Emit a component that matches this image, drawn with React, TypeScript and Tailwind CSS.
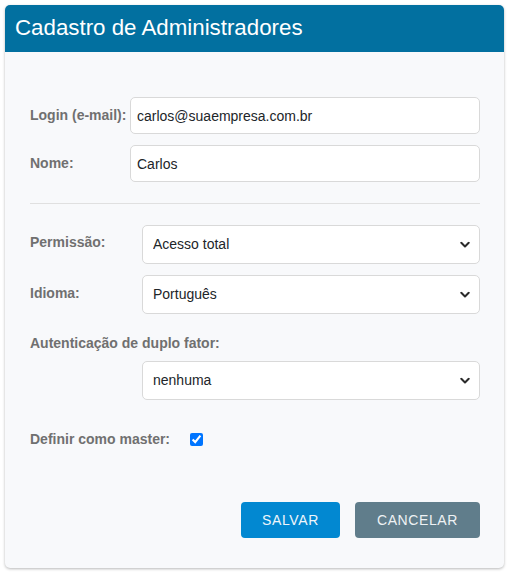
import React from "react";

function Chevron() {
  return (
    <svg
      className="pointer-events-none absolute right-[10px] top-1/2 -translate-y-1/2"
      width="10"
      height="7"
      viewBox="0 0 10 7"
      fill="none"
    >
      <path d="M1.3 1.3 L5 5 L8.7 1.3" stroke="#2b2b2b" strokeWidth="2" strokeLinecap="round" strokeLinejoin="round" />
    </svg>
  );
}

function Select({ value, options }: { value: string; options: string[] }) {
  return (
    <div className="relative flex-1">
      <select
        defaultValue={value}
        className="h-[39px] w-full appearance-none rounded-[5px] border border-[#d9d9d9] bg-white pl-[10px] pr-[30px] text-[14px] text-[#212529] outline-none"
      >
        {options.map((o) => (
          <option key={o} value={o}>
            {o}
          </option>
        ))}
      </select>
      <Chevron />
    </div>
  );
}

export default function App() {
  return (
    <div className="min-h-screen bg-white pl-[5px] pt-[5px]" style={{ fontFamily: '"Liberation Sans", Arial, sans-serif' }}>
      <div className="w-[499px] rounded-[5px] bg-[#f8f9fb] shadow-[0_1px_3px_rgba(0,0,0,0.28)]">
        <div className="flex h-[47px] items-center rounded-t-[5px] bg-[#0270a0] pl-[10px]">
          <h1 className="text-[22.3px] leading-none text-white">Cadastro de Administradores</h1>
        </div>
        <div className="pb-[30px] pl-[25px] pr-[24px] pt-[45px]">
          <div className="flex items-center">
            <label className="w-[100px] text-[14px] font-bold text-[#707070]">Login (e-mail):</label>
            <input
              defaultValue="carlos@suaempresa.com.br"
              className="h-[37px] flex-1 rounded-[5px] border border-[#d9d9d9] bg-white pl-[6px] text-[14px] text-[#212529] outline-none"
            />
          </div>
          <div className="mt-[11px] flex items-center">
            <label className="w-[100px] text-[14px] font-bold text-[#707070]">Nome:</label>
            <input
              defaultValue="Carlos"
              className="h-[37px] flex-1 rounded-[5px] border border-[#d9d9d9] bg-white pl-[6px] text-[14px] text-[#212529] outline-none"
            />
          </div>
          <div className="mt-[21px] h-px bg-[#e0e0e0]" />
          <div className="mt-[21px] flex items-center">
            <label className="w-[112px] -translate-y-[2px] text-[14px] font-bold text-[#707070]">Permissão:</label>
            <Select value="Acesso total" options={["Acesso total", "Restrito"]} />
          </div>
          <div className="mt-[11px] flex items-center">
            <label className="w-[112px] -translate-y-[1px] text-[14px] font-bold text-[#707070]">Idioma:</label>
            <Select value="Português" options={["Português", "English", "Español"]} />
          </div>
          <div className="mt-[19px] h-[20px] text-[14px] font-bold leading-[20px] text-[#707070]">
            Autenticação de duplo fator:
          </div>
          <div className="mt-[8px] flex pl-[112px]">
            <Select value="nenhuma" options={["nenhuma", "e-mail", "SMS"]} />
          </div>
          <div className="mt-[29px] flex h-[20px] items-center">
            <label className="w-[160px] text-[14px] font-bold text-[#707070]">Definir como master:</label>
            <input type="checkbox" defaultChecked className="m-0 h-[13px] w-[13px]" />
          </div>
          <div className="mt-[53px] flex justify-end gap-[15px]">
            <button className="h-[36px] w-[99px] rounded-[4px] bg-[#0288d1] text-[14px] tracking-[0.6px] text-[#eef6fb]">
              SALVAR
            </button>
            <button className="h-[36px] w-[125px] rounded-[4px] bg-[#607d8b] text-[14px] tracking-[0.6px] text-[#eef2f4]">
              CANCELAR
            </button>
          </div>
        </div>
      </div>
    </div>
  );
}
